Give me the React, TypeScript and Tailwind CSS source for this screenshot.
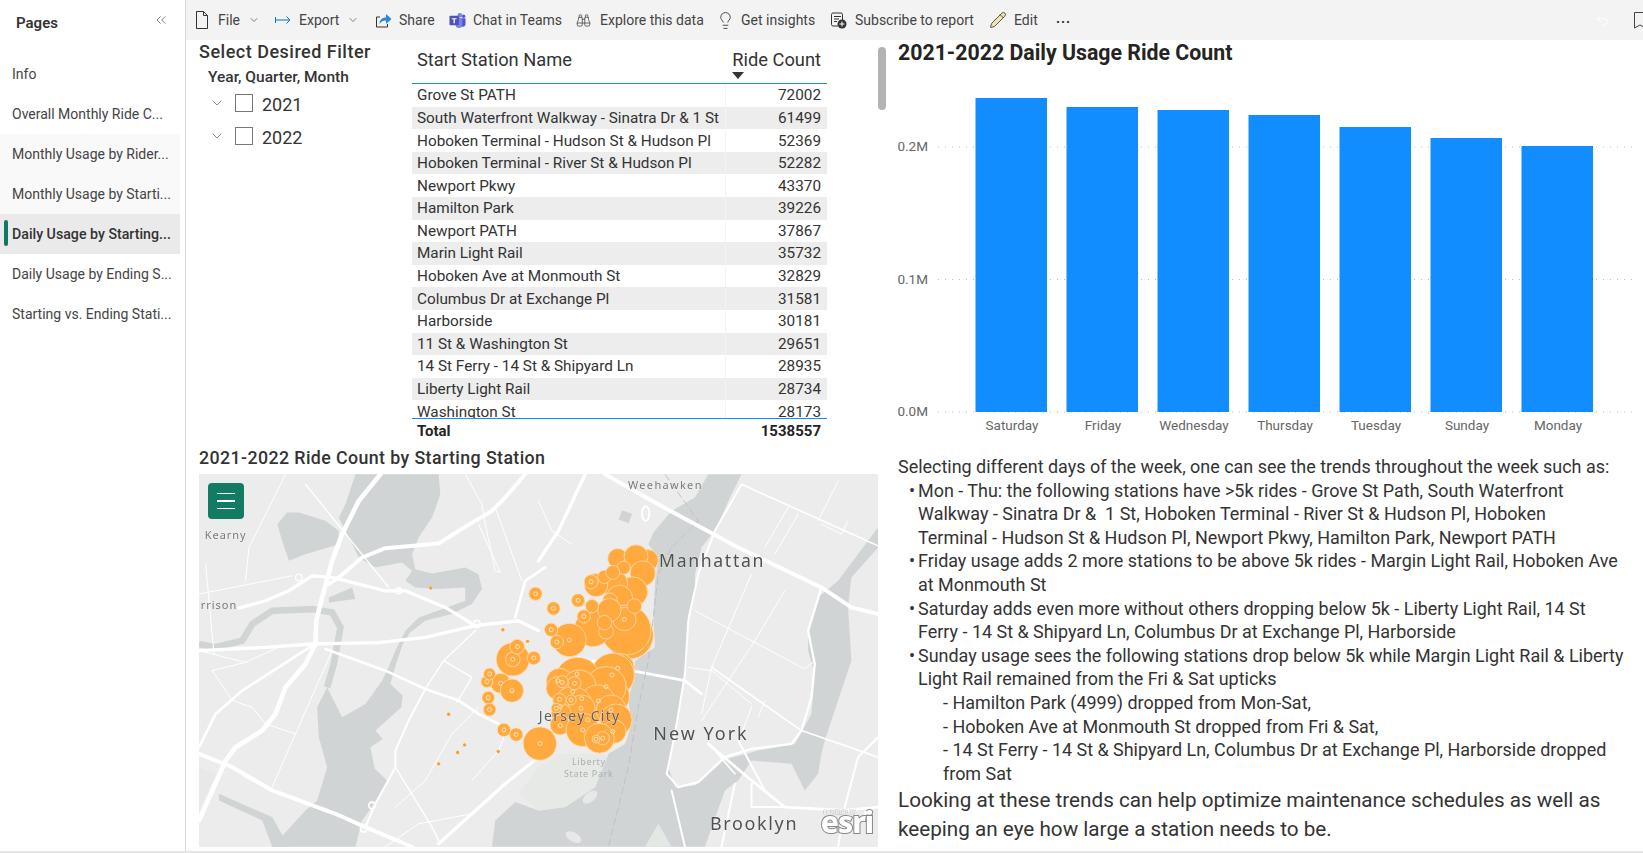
import { Binoculars, ChevronDown, ChevronsLeft, Lightbulb, Pencil, Undo2 } from "lucide-react"

const pages = [
  { name: "Info" },
  { name: "Overall Monthly Ride C..." },
  { name: "Monthly Usage by Rider...", soft: true },
  { name: "Monthly Usage by Starti...", soft: true },
  { name: "Daily Usage by Starting...", active: true },
  { name: "Daily Usage by Ending S..." },
  { name: "Starting vs. Ending Stati..." },
]

const stations = [
  ["Grove St PATH", 72002],
  ["South Waterfront Walkway - Sinatra Dr & 1 St", 61499],
  ["Hoboken Terminal - Hudson St & Hudson Pl", 52369],
  ["Hoboken Terminal - River St & Hudson Pl", 52282],
  ["Newport Pkwy", 43370],
  ["Hamilton Park", 39226],
  ["Newport PATH", 37867],
  ["Marin Light Rail", 35732],
  ["Hoboken Ave at Monmouth St", 32829],
  ["Columbus Dr at Exchange Pl", 31581],
  ["Harborside", 30181],
  ["11 St & Washington St", 29651],
  ["14 St Ferry - 14 St & Shipyard Ln", 28935],
  ["Liberty Light Rail", 28734],
  ["Washington St", 28173],
]

const days = [
  ["Saturday", 98],
  ["Friday", 107],
  ["Wednesday", 110],
  ["Thursday", 115],
  ["Tuesday", 127],
  ["Sunday", 138],
  ["Monday", 146],
] as const

// bubbles: x, y, r in 3x map crop units
const bubbles = [
  [415, 55, 30], [505, 60, 32], [470, 50, 36], [490, 100, 38], [440, 160, 45], [460, 155, 45], [405, 130, 40], [350, 135, 35],
  [375, 110, 20], [433, 83, 20], [400, 97, 21], [335, 125, 21], [420, 175, 40], [450, 285, 72], [440, 270, 75],
  [435, 237, 35], [340, 265, 55], [270, 300, 50], [465, 198, 22], [392, 181, 22], [338, 198, 20], [390, 210, 35], [380, 275, 22],
  [375, 248, 22], [313, 229, 20], [232, 306, 20], [215, 269, 20], [296, 181, 20], [222, 205, 20], [168, 161, 20],
  [100, 358, 50], [100, 358, 22], [113, 320, 22], [163, 354, 20], [63, 430, 30], [22, 425, 18], [30, 402, 18],
  [97, 452, 35], [26, 473, 19], [30, 509, 19], [73, 570, 20], [110, 584, 20], [181, 611, 50],
  [420, 385, 45], [400, 405, 65], [295, 420, 68], [240, 425, 40], [235, 445, 35], [395, 470, 55], [380, 440, 60], [300, 440, 50],
  [355, 490, 55], [395, 510, 45], [410, 540, 48], [280, 500, 60], [307, 505, 40], [245, 520, 30], [242, 555, 30],
  [310, 570, 50], [405, 575, 35], [360, 595, 45], [370, 595, 20], [350, 598, 12], [285, 430, 20], [248, 425, 18],
  [240, 480, 20], [275, 480, 15], [230, 505, 15],
]

const rings = [
  [335, 125], [435, 238], [270, 300], [232, 306], [215, 269], [296, 181], [222, 205], [168, 161], [313, 229], [114, 320],
  [100, 358], [163, 354], [30, 402], [22, 425], [63, 430], [97, 452], [26, 473], [30, 509], [73, 570], [110, 584], [181, 611],
  [415, 385], [398, 405], [293, 402], [380, 440], [235, 422], [248, 427], [285, 430], [280, 455], [240, 478], [275, 480],
  [307, 476], [230, 505], [243, 500], [357, 483], [395, 510], [305, 505], [325, 540], [243, 557], [310, 570], [400, 575],
  [370, 595], [350, 598],
]

const dots = [[696, 342], [913, 467], [987, 502], [750, 721], [798, 813], [777, 836], [720, 870], [899, 833]]

// white roads as polylines: width, points
const roads: [number, string][] = [
  [14, "545,0 480,80 430,180 400,260 370,370 352,440 350,510"],
  [12, "980,0 920,70 880,110 780,170 720,208 560,222 490,250 420,310 390,330"],
  [10, "120,402 200,380 270,350 340,305 400,310 560,350 620,350 740,400 830,455"],
  [10, "0,530 200,520 340,510 540,506 680,490 830,455 960,440 1020,470"],
  [14, "350,510 320,570 260,640 230,720 190,770 110,820 80,860 0,1040"],
  [8, "340,515 130,650 50,720 0,820"],
  [8, "380,525 560,590 680,645 780,680 840,720 900,750"],
  [12, "0,840 100,880 220,950 410,1020 500,1060 640,1119"],
  [6, "680,645 630,740 590,830 590,880 530,990 500,1060"],
  [4, "590,880 700,1060 720,1100"],
  [10, "720,1110 820,1020 920,930 1020,850"],
  [8, "1040,280 980,320 950,430"],
  [4, "320,30 570,340"],
  [3, "0,360 280,305"],
  [3, "140,320 150,220 260,0"],
  [3, "20,270 45,540"],
  [3, "40,590 100,680 160,700 200,750 290,780 215,950 130,905"],
  [3, "400,530 290,780"],
  [3, "40,590 140,565 260,510"],
  [3, "0,530 140,565"],
  [4, "830,470 735,560 680,645"],
  [4, "735,560 820,610 775,685"],
  [3, "820,920 900,830 920,780"],
  [3, "680,920 760,780 840,700"],
  [3, "680,920 590,1000"],
  [3, "820,1020 660,1050 560,1119"],
  [3, "800,0 850,90 860,150 890,290 905,295 840,150"],
  [3, "890,100 970,320"],
  [12, "1220,0 1370,85 1620,220 1870,340 1960,400 2040,420"],
  [10, "1160,0 1080,170 1020,260"],
  [3, "1020,80 1060,170 1120,210"],
  [8, "1140,550 1300,590 1460,620 1510,660"],
  [6, "1630,30 1550,170 1500,300 1470,440 1460,600 1430,780 1405,900 1440,940"],
  [7, "1870,340 1830,470 1850,570 1840,670 1810,770 1780,810 1660,825 1580,850 1500,925 1440,940"],
  [3, "1490,410 1820,585 1850,560"],
  [5, "1540,580 1810,770 2040,850"],
  [3, "1470,580 1540,590 1660,690"],
  [3, "1760,350 1670,500 1510,740"],
  [3, "1660,300 1540,580 1510,720"],
  [3, "1800,120 1730,240"],
  [3, "1770,100 1700,220"],
  [5, "1630,30 2040,215"],
  [3, "1870,150 1930,180 1950,140"],
  [3, "1660,700 1630,780"],
  [3, "1700,680 1680,730"],
  [8, "1530,810 1660,920 1760,1000 1940,1010 2040,1000"],
  [6, "1620,800 1700,950"],
  [6, "1660,930 1660,1000 1760,1000"],
  [6, "1610,930 1580,1070 1570,1119"],
  [6, "2040,790 1980,850 1940,1000 1920,1119"],
  [6, "1420,950 1460,1119"],
  [5, "1550,830 1610,900"],
  [3, "1920,20 1860,140"],
]

const mapLabels: [string, number, number, number, number, string][] = [
  ["Kearny", 17, 194, 33, 3, "#77797a"],
  ["Weehawken", 1289, 45, 33, 4, "#77797a"],
  ["Manhattan", 1382, 278, 53, 5, "#4f5153"],
  ["New York", 1365, 798, 54, 6, "#4f5153"],
  ["Brooklyn", 1535, 1068, 54, 5, "#4f5153"],
  ["Jersey City", 1021, 740, 42, 4, "#5b6066"],
]

function Sidebar() {
  return (
    <div className="w-[186px] shrink-0 border-r border-[#d6d6d6]">
      <div className="h-[54px] flex justify-between pl-4 pr-[16px] pt-[12px]">
        <span className="text-[15px] font-semibold text-[#333]">Pages</span>
        <ChevronsLeft className="w-4 h-4 text-[#666]" strokeWidth={1.25} />
      </div>
      {pages.map((p) => (
        <div
          key={p.name}
          className={`relative w-[180px] h-10 flex items-center pl-3 pt-[1px] whitespace-nowrap ${
            p.active ? "bg-[#eaeaea] text-[14.2px] font-medium text-[#333]" : p.soft ? "bg-[#f9f9f9] text-[14px] text-[#444]" : "text-[14px] text-[#444]"
          }`}
        >
          {p.active && <div className="absolute left-1 top-[6px] w-1 h-[26px] rounded-sm bg-[#117865]" />}
          {p.name}
        </div>
      ))}
    </div>
  )
}

const FileIcon = () => (
  <svg width="12" height="18" viewBox="0 0 12 18" fill="none" stroke="#333">
    <path d="M0.500 0.500h7l4 4v13h-11zM7.500 0.500v4h4" />
  </svg>
)

const ExportIcon = () => (
  <svg width="16" height="16" viewBox="0 0 16 16" fill="none" stroke="#0078d4" strokeWidth="1">
    <path d="M0.500 5v6M1 8h14M11.500 4.500 15 8l-3.500 3.500" />
  </svg>
)

const ShareIcon = () => (
  <svg width="17" height="16" viewBox="0 0 17 16" fill="none">
    <path d="M5 5H1.500v10h11v-3" stroke="#333" />
    <path d="M4.500 12c0-4 2.500-6.500 6.500-6.500V2l5.500 5-5.500 5V8.500c-3 0-5 1-6.500 3.500z" fill="#2b88d8" />
  </svg>
)

const TeamsIcon = () => (
  <svg width="17" height="17" viewBox="0 0 18 17">
    <circle cx="11.500" cy="3" r="2.500" fill="#7b83eb" />
    <circle cx="15.500" cy="4" r="1.800" fill="#5059c9" />
    <path d="M9 6h8.500v5.500a3 3 0 0 1-6 1H9z" fill="#5059c9" />
    <path d="M7 6h7v7a3.500 3.500 0 0 1-7 0z" fill="#7b83eb" />
    <rect x="0.500" y="3.500" width="10" height="10" rx="1" fill="#4b53bc" />
    <path d="M3 6h5v1.200H6.200V11.500H4.800V7.200H3z" fill="#fff" />
  </svg>
)

const SubscribeIcon = () => (
  <svg width="17" height="17" viewBox="0 0 17 17" fill="none">
    <path d="M8 14H3a1.500 1.500 0 0 1-1.500-1.500v-10A1.500 1.500 0 0 1 3 1h8a1.500 1.500 0 0 1 1.500 1.500V8" stroke="#333" />
    <path d="M4 4.500h7M4 7h5M4 9.500h3" stroke="#333" />
    <circle cx="12" cy="12" r="4.500" fill="#333" />
    <path d="M12 9.500v5M9.500 12h5" stroke="#fff" />
  </svg>
)

function ToolItem({ icon, label, menu, className }: { icon: React.ReactNode; label: string; menu?: boolean; className: string }) {
  return (
    <div className={`flex items-center shrink-0 ${className}`}>
      {icon}
      <span className="ml-[var(--g)]">{label}</span>
      {menu && <ChevronDown className="w-3 h-3 ml-2 text-[#555]" strokeWidth={1.5} />}
    </div>
  )
}

function Toolbar() {
  return (
    <div className="h-10 bg-[#f3f3f3] flex items-center pl-[10px] text-[14px] text-[#444] overflow-hidden">
      <ToolItem className="[--g:10px] w-[79px]" menu icon={<FileIcon />} label="File" />
      <ToolItem className="[--g:8px] w-[100px]" menu icon={<ExportIcon />} label="Export" />
      <ToolItem className="[--g:7px] w-[74px]" icon={<ShareIcon />} label="Share" />
      <ToolItem className="[--g:7px] w-[127px]" icon={<TeamsIcon />} label="Chat in Teams" />
      <ToolItem className="[--g:9px] w-[140px]" icon={<Binoculars className="w-[15px] h-[15px] text-[#444]" strokeWidth={1.25} />} label="Explore this data" />
      <ToolItem className="[--g:6px] w-[114px]" icon={<Lightbulb className="w-[19px] h-[19px] text-[#333]" strokeWidth={1.1} />} label="Get insights" />
      <ToolItem className="[--g:8px] w-[159px]" icon={<SubscribeIcon />} label="Subscribe to report" />
      <ToolItem className="[--g:7px] w-[67px]" icon={<Pencil className="w-[18px] h-[18px] text-[#333] fill-[#f3e5ab]" strokeWidth={1.1} />} label="Edit" />
      <span className="text-[#333] font-bold tracking-[1px] -mt-1">...</span>
      <div className="flex-1" />
      <Undo2 className="w-[15px] h-[15px] text-white mr-[24px]" strokeWidth={1.25} />
      <svg width="9" height="17" viewBox="0 0 9 17" fill="none" stroke="#444" className="shrink-0">
        <path d="M0.500 0.500H12V16L6 13 0.500 16z" />
      </svg>
    </div>
  )
}

function Filter() {
  return (
    <div className="w-[213px] shrink-0">
      <div className="h-6 text-[18px] leading-6 font-medium tracking-[0.5px] text-[#333]">Select Desired Filter</div>
      <div className="mt-[2px] mb-[-1px] pl-[9px] text-[15.5px] leading-[22px] font-medium text-[#333]">Year, Quarter, Month</div>
      {["2021", "2022"].map((y) => (
        <div key={y} className="h-[33px] flex items-center pl-[10px] text-[#333]">
          <ChevronDown className="w-4 h-4 -mt-[2px] text-[#555]" strokeWidth={1} />
          <div className="w-[18px] h-[18px] -mt-[2px] ml-[10px] border border-[#777] bg-white" />
          <span className="ml-[9px] mt-[1px] text-[18px]">{y}</span>
        </div>
      ))}
    </div>
  )
}

function StationTable() {
  return (
    <div className="w-[415px] shrink-0 text-[#333]">
      <div className="h-11 border-b border-[#118dff] flex justify-between pl-[5px] pr-[6px] pt-[6px] text-[18.3px]">
        <span>Start Station Name</span>
        <div className="relative">
          <span>Ride Count</span>
          <div className="absolute left-0 top-[26px] w-0 h-0 border-x-[6px] border-t-[7px] border-x-transparent border-t-[#333]" />
        </div>
      </div>
      <div className="h-[335px] overflow-hidden border-b border-[#118dff]">
        {stations.map(([name, n], i) => (
          <div key={name} className={`h-[22.6px] flex items-center pt-[1px] text-[15.3px] ${i % 2 ? "bg-[#ededed]" : "bg-white"}`}>
            <div className="w-[314px] h-full flex items-center pl-[5px] border-r border-[#f3f3f3] whitespace-nowrap">{name}</div>
            <div className="flex-1 text-right pr-[6px]">{n}</div>
          </div>
        ))}
      </div>
      <div className="h-[24px] flex justify-between items-center pl-[5px] pr-[6px] text-[15px] font-bold text-[#252423]">
        <span>Total</span>
        <span>1538557</span>
      </div>
    </div>
  )
}

function StationMap() {
  return (
    <div className="relative w-[679px] h-[373px] overflow-hidden bg-[#ececec]">
      <svg viewBox="0 0 2040 1119" className="w-full h-full blur-[0.5px] font-['Noto_Sans',sans-serif]">
        <g fill="#d1d4d5">
          <path d="M470 0 720 0 725 60 700 130 660 190 640 240 650 285 700 298 800 280 840 300 850 345 820 390 760 420 680 440 635 475 612 510 592 570 575 630 612 665 608 700 530 770 552 795 515 820 528 885 565 920 530 985 490 1040 470 1119 220 1119 320 1010 355 980 385 880 360 790 355 700 385 640 430 730 500 690 550 620 565 590 590 530 620 470 660 430 740 402 800 380 800 340 720 345 650 340 620 320 640 290 610 265 530 280 480 250 420 130 440 90z" />
          <path d="M235 150 265 115 300 115 380 140 420 170 420 210 320 240 270 260 250 200z" />
          <path d="M390 370 460 340 470 375 390 385z" />
          <path d="M60 960 220 1030 270 1119 220 1119 190 1040 60 980z" />
          <path d="M1530 0 1630 0 1600 60 1550 170 1510 220 1490 300 1490 340 1470 420 1465 560 1450 680 1430 760 1410 880 1430 940 1490 935 1570 860 1680 830 1790 810 1840 720 1850 600 1830 530 1830 470 1860 370 1920 320 2040 160 2040 220 1960 310 1950 400 1960 560 1920 680 1880 800 1870 840 1860 900 1820 950 1780 870 1660 860 1620 920 1580 950 1520 1119 880 1119 890 1040 950 985 1020 1010 1100 1000 1190 940 1230 840 1280 810 1300 750 1290 680 1305 620 1310 560 1370 520 1365 420 1370 330 1380 250 1350 210 1365 175 1420 110 1490 70z" />
          <rect x="1265" y="112" width="32" height="30" transform="rotate(20 1280 127)" />
        </g>
        <path d="M0 510 50 520 130 500 160 450 220 410 340 405 400 415 425 460 405 570 385 640" fill="none" stroke="#d1d4d5" strokeWidth="20" />
        <path d="M0 880 50 900 0 1010zM960 960 1020 1010 1100 1000 1190 940 1230 840 1080 840 1020 880z" fill="#e6e9e6" />
        <ellipse cx="1175" cy="970" rx="26" ry="14" transform="rotate(-40 1175 970)" fill="#e8e8e8" />
        <ellipse cx="1125" cy="1090" rx="26" ry="14" transform="rotate(30 1125 1090)" fill="#e8e8e8" />
        <path d="M1380 1050 1420 1119 1340 1119z" fill="#e4e8e4" />
        <g fill="none" stroke="#fff" strokeLinejoin="round" strokeLinecap="round">
          {roads.map(([w, pts]) => (
            <polyline key={pts} points={pts} strokeWidth={w} />
          ))}
          <circle cx="835" cy="450" r="11" strokeWidth="5" />
          <circle cx="520" cy="995" r="10" strokeWidth="5" />
          <circle cx="495" cy="1065" r="10" strokeWidth="5" />
          <circle cx="300" cy="310" r="10" strokeWidth="4" />
          <circle cx="600" cy="350" r="9" strokeWidth="4" />
          <ellipse cx="1342" cy="118" rx="11" ry="22" strokeWidth="6" />
        </g>
        <path d="M1400 0 1500 140 1420 220 1380 300 1350 560 1320 700 1290 880 1230 1119" fill="none" stroke="#bfc2c3" strokeWidth="3" strokeDasharray="22 10" />
        <g transform="translate(843 198)">
          {bubbles.map(([x, y, r], i) => (
            <circle key={i} cx={x} cy={y} r={r} fill="#ffa93f" stroke="#ffdcae" strokeWidth="2.500" />
          ))}
          {rings.map(([x, y], i) => (
            <circle key={i} cx={x} cy={y} r="6" fill="none" stroke="#ffe3bd" strokeWidth="3" />
          ))}
        </g>
        {dots.map(([x, y]) => (
          <circle key={x} cx={x} cy={y} r="5" fill="#ff9f24" />
        ))}
        {mapLabels.map(([t, x, y, s, ls, c]) => (
          <text key={t} x={x} y={y} fontSize={s} fill={c} letterSpacing={ls} stroke="#ffffff" strokeOpacity="0.35" strokeWidth="3" paintOrder="stroke">
            {t}
          </text>
        ))}
        <text x="115" y="404" textAnchor="end" fontSize="33" fill="#77797a" letterSpacing="3">arrison</text>
        <text fontSize="27" fill="#a6b2a8" letterSpacing="2" textAnchor="middle">
          <tspan x="1171" y="873">Liberty</tspan>
          <tspan x="1171" y="910">State Park</tspan>
        </text>
        <text x="1876" y="1022" fontSize="15" fill="#fff" stroke="#999" strokeWidth="1.500" paintOrder="stroke" fontWeight="700">POWERED BY</text>
        <text x="1868" y="1078" fontSize="90" fill="#fff" stroke="#888" strokeWidth="6" paintOrder="stroke" fontWeight="800" letterSpacing="-3">esri</text>
        <circle cx="2003" cy="1018" r="6" fill="#fff" />
      </svg>
      <div className="absolute left-[9px] top-[9px] w-9 h-9 rounded bg-[#137a63] flex flex-col items-center justify-center gap-[6px]">
        <div className="w-[18px] h-[1.5px] bg-white" />
        <div className="w-[18px] h-[1.5px] bg-white" />
        <div className="w-[18px] h-[1.5px] bg-white" />
      </div>
    </div>
  )
}

function DayChart() {
  return (
    <svg width="745" height="385" viewBox="898 64 745 385" className="font-['Roboto',sans-serif]">
      {[["0.2M", 147], ["0.1M", 279.5], ["0.0M", 412]].map(([t, y]) => (
        <g key={t}>
          <line x1="938" x2="1636" y1={y} y2={y} stroke="#bdbdbd" strokeDasharray="1 6" />
          <text x="928" y={Number(y) + 4} textAnchor="end" fontSize="13.500" fill="#666">{t}</text>
        </g>
      ))}
      {days.map(([d, top], i) => (
        <g key={d}>
          <rect x={975.5 + i * 91} y={top} width="71.500" height={412 - top} fill="#118dff" />
          <text x={1012 + i * 91} y="430" textAnchor="middle" fontSize="13.500" fill="#666">{d}</text>
        </g>
      ))}
    </svg>
  )
}

function Notes() {
  return (
    <div className="mt-[6px] text-[#333] text-[17.95px] leading-[23.6px] whitespace-nowrap">
      <p>Selecting different days of the week, one can see the trends throughout the week such as:</p>
      <ul className="pl-[20px]">
        <li className="relative">
          <span className="absolute -left-[9px]">•</span>
          Mon - Thu: the following stations have &gt;5k rides - Grove St Path, South Waterfront<br />
          Walkway - Sinatra Dr &amp;&nbsp; 1 St, Hoboken Terminal - River St &amp; Hudson Pl, Hoboken<br />
          Terminal - Hudson St &amp; Hudson Pl, Newport Pkwy, Hamilton Park, Newport PATH
        </li>
        <li className="relative">
          <span className="absolute -left-[9px]">•</span>
          Friday usage adds 2 more stations to be above 5k rides - Margin Light Rail, Hoboken Ave<br />
          at Monmouth St
        </li>
        <li className="relative">
          <span className="absolute -left-[9px]">•</span>
          Saturday adds even more without others dropping below 5k - Liberty Light Rail, 14 St<br />
          Ferry - 14 St &amp; Shipyard Ln, Columbus Dr at Exchange Pl, Harborside
        </li>
        <li className="relative">
          <span className="absolute -left-[9px]">•</span>
          Sunday usage sees the following stations drop below 5k while Margin Light Rail &amp; Liberty<br />
          Light Rail remained from the Fri &amp; Sat upticks
        </li>
      </ul>
      <div className="pl-[45px]">
        <p>- Hamilton Park (4999) dropped from Mon-Sat,</p>
        <p>- Hoboken Ave at Monmouth St dropped from Fri &amp; Sat,</p>
        <p>- 14 St Ferry - 14 St &amp; Shipyard Ln, Columbus Dr at Exchange Pl, Harborside dropped<br />from Sat</p>
      </div>
      <p className="mt-[1px] text-[20.7px] leading-[28.300px]">
        Looking at these trends can help optimize maintenance schedules as well as<br />
        keeping an eye how large a station needs to be.
      </p>
    </div>
  )
}

export default function App() {
  return (
    <div className="w-[1643px] h-[853px] overflow-hidden flex bg-white border-b-2 border-[#e6e6e6] font-['Roboto',sans-serif]">
      <Sidebar />
      <div className="flex-1 min-w-0">
        <Toolbar />
        <div className="flex">
          <div className="relative w-[712px] shrink-0 pl-[13px]">
            <div className="flex">
              <Filter />
              <StationTable />
            </div>
            <div className="absolute left-[692px] top-[7px] w-2 h-[63px] rounded bg-[#b3b3b3]" />
            <div className="h-[31px] flex items-center text-[17.8px] font-medium tracking-[0.4px] text-[#333]">
              2021-2022 Ride Count by Starting Station
            </div>
            <StationMap />
          </div>
          <div className="flex-1 min-w-0">
            <div className="h-[23px] mt-[1px] text-[21.3px] leading-[24px] font-bold text-[#252423]">2021-2022 Daily Usage Ride Count</div>
            <DayChart />
            <Notes />
          </div>
        </div>
      </div>
    </div>
  )
}
